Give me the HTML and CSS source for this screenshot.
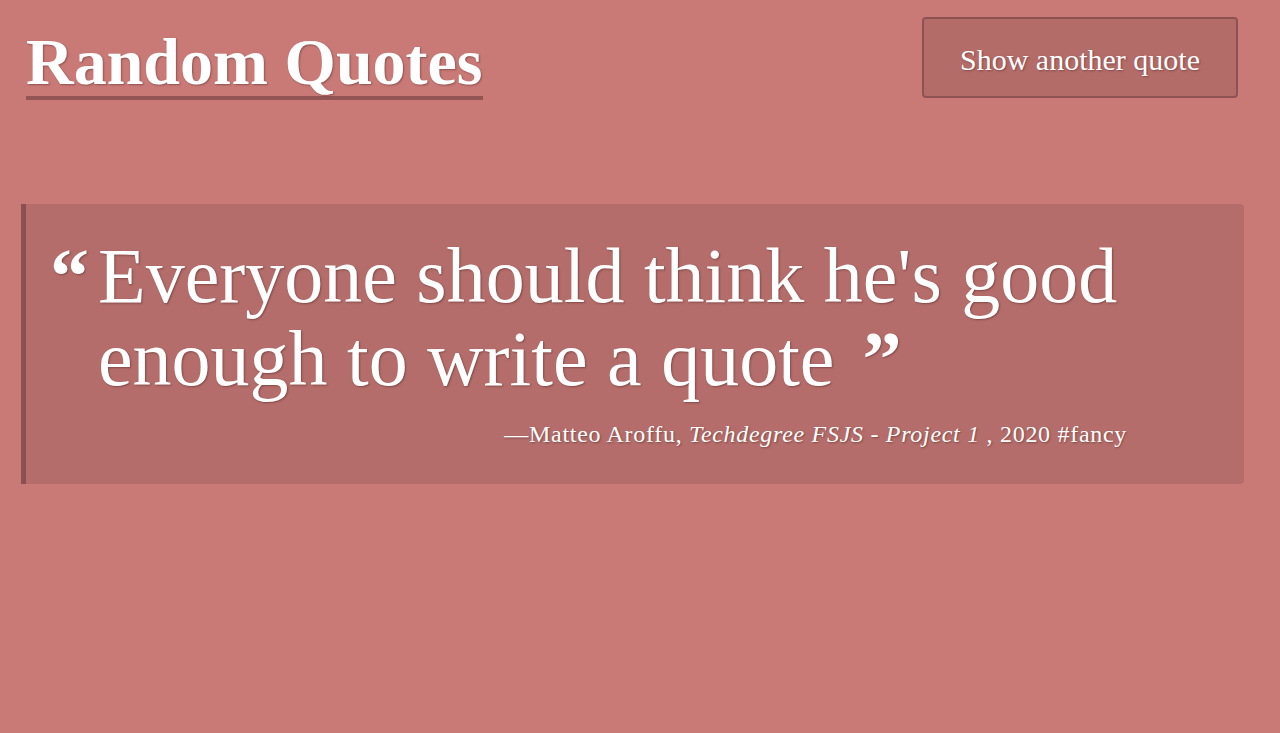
FILE: index.html
```html
<!DOCTYPE html>
<html lang="en">
<head>
<meta charset="utf-8">
<title>Random Quotes</title>
<link rel="stylesheet" href="styles.css">
</head>
<body>
<header class="top">
  <h1 class="title">Random Quotes</h1>
  <button class="load-quote" type="button">Show another quote</button>
</header>
<main class="quote-box">
  <p class="quote"><span class="mark mark-open">&ldquo;</span>Everyone should think he's good enough to write a quote<span class="mark mark-close">&rdquo;</span></p>
  <p class="source">&mdash;Matteo Aroffu, <span class="citation">Techdegree FSJS - Project 1</span> , <span class="year">2020</span> #fancy</p>
</main>
</body>
</html>
```

FILE: styles.css
```css
html, body {
  margin: 0;
  padding: 0;
}

body {
  background: #c97a76;
  color: #fff;
  font-family: "Liberation Serif", "Times New Roman", serif;
  min-height: 733px;
  text-shadow: 1px 1px 2px rgba(60, 20, 20, 0.4);
}

.top {
  display: flex;
  justify-content: space-between;
  align-items: flex-start;
  padding: 17px 42px 0 26px;
}

.title {
  margin: 12px 0 0;
  font-size: 66px;
  line-height: 66px;
  font-weight: bold;
  padding-bottom: 1px;
  border-bottom: 4px solid #925553;
}

.load-quote {
  width: 316px;
  height: 81px;
  box-sizing: border-box;
  background: #b46c69;
  border: 2px solid #8d5352;
  border-radius: 4px;
  color: #fff;
  font-family: "Liberation Serif", "Times New Roman", serif;
  font-size: 30px;
  text-shadow: 1px 1px 2px rgba(60, 20, 20, 0.4);
  cursor: pointer;
  padding: 4px 0 0;
}

.quote-box {
  margin: 104px 36px 0 21px;
  background: #b46d6a;
  border-left: 5px solid #8b5150;
  border-radius: 0 4px 4px 0;
  padding: 30px 117px 37px 72px;
}

.quote {
  margin: 0;
  font-size: 78px;
  line-height: 83px;
  text-indent: -48px;
}

.mark {
  font-weight: bold;
  display: inline-block;
  text-indent: 0;
}

.mark-open {
  width: 48px;
}

.mark-close {
  margin-left: 28px;
}

.source {
  margin: 21px 0 0;
  text-align: right;
  font-size: 24px;
  line-height: 26px;
  letter-spacing: 0.7px;
}

.citation {
  font-style: italic;
}
```
